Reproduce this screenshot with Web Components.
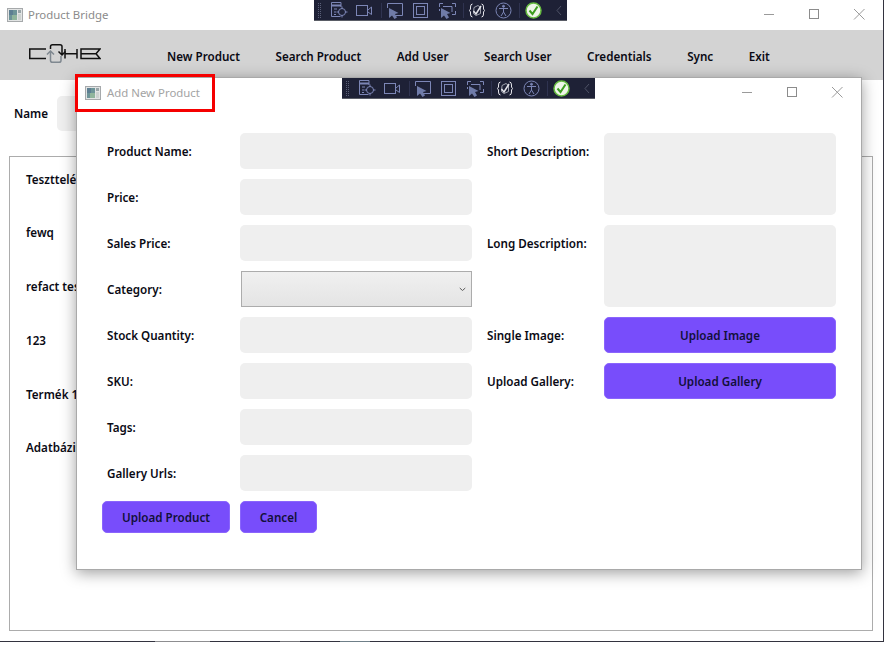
<!DOCTYPE html>
<html>
<head>
<meta charset="utf-8">
<title>Product Bridge</title>
<style>
html,body{margin:0;background:#fff;font-family:"Noto Sans","Open Sans",sans-serif;}
</style>
</head>
<body>
<main-window>
  <window-title slot="title">Product Bridge</window-title>
  <nav-bar slot="nav">
    <nav-item>New Product</nav-item>
    <nav-item>Search Product</nav-item>
    <nav-item>Add User</nav-item>
    <nav-item>Search User</nav-item>
    <nav-item>Credentials</nav-item>
    <nav-item>Sync</nav-item>
    <nav-item>Exit</nav-item>
  </nav-bar>
  <search-row slot="search">Name</search-row>
  <product-list slot="list">
    <product-line>Teszttelés</product-line>
    <product-line>fewq</product-line>
    <product-line>refact teszt</product-line>
    <product-line>123</product-line>
    <product-line>Termék 1</product-line>
    <product-line>Adatbázis</product-line>
  </product-list>
</main-window>

<tool-strip style="left:314px;top:0"></tool-strip>

<product-dialog>
  <window-title slot="title" dialog>Add New Product</window-title>
  <form-row slot="left"><span slot="label">Product Name:</span><form-input></form-input></form-row>
  <form-row slot="left"><span slot="label">Price:</span><form-input></form-input></form-row>
  <form-row slot="left"><span slot="label">Sales Price:</span><form-input></form-input></form-row>
  <form-row slot="left"><span slot="label">Category:</span><form-select></form-select></form-row>
  <form-row slot="left"><span slot="label">Stock Quantity:</span><form-input></form-input></form-row>
  <form-row slot="left"><span slot="label">SKU:</span><form-input></form-input></form-row>
  <form-row slot="left"><span slot="label">Tags:</span><form-input></form-input></form-row>
  <form-row slot="left"><span slot="label">Gallery Urls:</span><form-input></form-input></form-row>

  <form-row slot="right" narrow><span slot="label">Short Description:</span><form-input tall></form-input></form-row>
  <form-row slot="right" narrow><span slot="label">Long Description:</span><form-input tall></form-input></form-row>
  <form-row slot="right" narrow><span slot="label">Single Image:</span><purple-button wide>Upload Image</purple-button></form-row>
  <form-row slot="right" narrow><span slot="label">Upload Gallery:</span><purple-button wide>Upload Gallery</purple-button></form-row>

  <purple-button slot="actions" style="width:128px">Upload Product</purple-button>
  <purple-button slot="actions" style="width:77px">Cancel</purple-button>
</product-dialog>

<tool-strip style="left:342px;top:78px"></tool-strip>
<red-mark></red-mark>

<script>
const appIcon = `
<svg width="16" height="14" viewBox="0 0 16 14" style="flex:none">
  <rect x=".5" y=".5" width="15" height="13" fill="#e2e4e4" stroke="#a6a9ab"/>
  <rect x="2" y="2" width="8" height="10" fill="#6d9498"/>
  <rect x="2" y="2" width="4" height="5" fill="#5d7f92"/>
  <rect x="5" y="7" width="5" height="5" fill="#90b59c"/>
  <rect x="11" y="2" width="3" height="3" fill="#99a5a8"/>
  <rect x="11" y="6" width="3" height="6" fill="#cdd2d0"/>
</svg>`;

const winButtons = `
<svg width="112" height="12" viewBox="0 0 112 12" style="flex:none;position:relative;top:-1px">
  <path d="M1 6.500H11" stroke="#9a9a9a" fill="none"/>
  <rect x="46.500" y="1.500" width="9" height="9" stroke="#8c8c8c" fill="none"/>
  <path d="M91 1L101.500 11.500M101.500 1L91 11.500" stroke="#9a9a9a" fill="none"/>
</svg>`;

class WindowTitle extends HTMLElement {
  constructor() {
    super();
    this.attachShadow({ mode: "open" });
    this.shadowRoot.innerHTML = `
    <style>
    :host{display:flex;align-items:center;height:30px;padding:0 8px 0 7px;font-size:11.4px;color:#8b8b8b;}
    :host([dialog]){padding:0 8px 0 8px;color:#a3a3a3;}
    span{margin-left:5px;flex:1;position:relative;top:-1px;}
    :host([dialog]) span{margin-left:6px;}
    </style>
    ${appIcon}<span><slot></slot></span>${winButtons}`;
  }
}
customElements.define("window-title", WindowTitle);

class NavBar extends HTMLElement {
  constructor() {
    super();
    this.attachShadow({ mode: "open" });
    this.shadowRoot.innerHTML = `
    <style>
    :host{display:flex;align-items:center;height:50px;background:#d3d3d3;padding-left:29px;}
    svg{flex:none;margin-right:66px;position:relative;top:-1px;}
    div{display:flex;gap:35.6px;position:relative;top:1px;}
    </style>
    <svg width="72" height="20" viewBox="0 0 72 20" fill="none">
      <path d="M17 5H.75V14.500H17" stroke="#111" stroke-width="1.500"/>
      <path d="M21.500 5V2.500Q21.500 .75 23.500 .75H31Q33 .75 33 2.500V10M29.500 7.500L33 11L36.500 7.500" stroke="#111" stroke-width="1.500"/>
      <path d="M32 12V16.500Q32 18.300 30 18.300H23.500Q21.500 18.300 21.500 16.500V7.500M18 10.500L21.500 7L25 10.500" stroke="#7f8890" stroke-width="1.500"/>
      <path d="M36 5V14.500M36 9.700H48M48 5V14.500" stroke="#111" stroke-width="1.500"/>
      <path d="M52 5H71L67 9.700L71 14.500H52ZM52 9.700H67" stroke="#111" stroke-width="1.500"/>
    </svg>
    <div><slot></slot></div>`;
  }
}
customElements.define("nav-bar", NavBar);

class NavItem extends HTMLElement {
  constructor() {
    super();
    this.attachShadow({ mode: "open" });
    this.shadowRoot.innerHTML = `
    <style>:host{display:block;font-size:11.65px;font-weight:600;color:#0a0a14;white-space:nowrap;}</style>
    <slot></slot>`;
  }
}
customElements.define("nav-item", NavItem);

class SearchRow extends HTMLElement {
  constructor() {
    super();
    this.attachShadow({ mode: "open" });
    this.shadowRoot.innerHTML = `
    <style>
    :host{display:flex;align-items:center;gap:9px;height:35px;margin:16px 0 25px 14px;font-size:11.65px;font-weight:600;color:#0a0a14;}
    div{width:240px;height:35px;border-radius:5px;background:#efefef;}
    </style>
    <slot></slot><div></div>`;
  }
}
customElements.define("search-row", SearchRow);

class ProductList extends HTMLElement {
  constructor() {
    super();
    this.attachShadow({ mode: "open" });
    this.shadowRoot.innerHTML = `
    <style>
    :host{display:flex;flex-direction:column;gap:9.8px;height:475px;margin:0 10px 0 9px;border:1px solid #acacac;padding:0 16px;box-sizing:border-box;}
    </style>
    <slot></slot>`;
  }
}
customElements.define("product-list", ProductList);

class ProductLine extends HTMLElement {
  constructor() {
    super();
    this.attachShadow({ mode: "open" });
    this.shadowRoot.innerHTML = `
    <style>:host{display:flex;align-items:center;height:44px;font-size:11.65px;font-weight:600;color:#0a0a14;}</style>
    <slot></slot>`;
  }
}
customElements.define("product-line", ProductLine);

class MainWindow extends HTMLElement {
  constructor() {
    super();
    this.attachShadow({ mode: "open" });
    this.shadowRoot.innerHTML = `
    <style>
    :host{display:flex;flex-direction:column;width:884px;height:642px;box-sizing:border-box;border-right:1px solid #33333f;background:#fff;}
    .edge{margin-top:auto;height:1px;background:linear-gradient(90deg,#33333f 0 155px,#8d8d90 155px 210px,#33333f 210px 280px,#77777c 280px 300px,#33333f 300px 340px,#6f7f88 340px 370px,#33333f 370px);}
    </style>
    <slot name="title"></slot>
    <slot name="nav"></slot>
    <slot name="search"></slot>
    <slot name="list"></slot>
    <div class="edge"></div>`;
  }
}
customElements.define("main-window", MainWindow);

class ProductDialog extends HTMLElement {
  constructor() {
    super();
    this.attachShadow({ mode: "open" });
    this.shadowRoot.innerHTML = `
    <style>
    :host{position:absolute;left:76px;top:77px;width:786px;height:493px;box-sizing:border-box;border:1px solid #a9a9a9;background:#fff;box-shadow:0 3px 14px rgba(0,0,0,.38);}
    .form{display:flex;gap:15px;padding:25px 0 0 30px;}
    .col{display:flex;flex-direction:column;gap:10px;}
    .actions{display:flex;gap:10px;padding:10px 0 0 25px;}
    </style>
    <slot name="title"></slot>
    <div class="form">
      <div class="col"><slot name="left"></slot></div>
      <div class="col"><slot name="right"></slot></div>
    </div>
    <div class="actions"><slot name="actions"></slot></div>`;
  }
}
customElements.define("product-dialog", ProductDialog);

class FormRow extends HTMLElement {
  constructor() {
    super();
    this.attachShadow({ mode: "open" });
    this.shadowRoot.innerHTML = `
    <style>
    :host{display:grid;grid-template-columns:133px 232px;font-size:11.65px;font-weight:600;color:#0a0a14;}
    :host([narrow]){grid-template-columns:117px 232px;}
    .label{line-height:38px;height:36px;white-space:nowrap;}
    </style>
    <div class="label"><slot name="label"></slot></div>
    <slot></slot>`;
  }
}
customElements.define("form-row", FormRow);

class FormInput extends HTMLElement {
  constructor() {
    super();
    this.attachShadow({ mode: "open" });
    this.shadowRoot.innerHTML = `
    <style>
    :host{display:block;height:36px;border-radius:5px;background:#efefef;}
    :host([tall]){height:82px;}
    </style>`;
  }
}
customElements.define("form-input", FormInput);

class FormSelect extends HTMLElement {
  constructor() {
    super();
    this.attachShadow({ mode: "open" });
    this.shadowRoot.innerHTML = `
    <style>
    :host{display:flex;align-items:center;justify-content:flex-end;height:36px;margin-left:1px;padding-right:5px;box-sizing:border-box;border:1px solid #acacac;background:linear-gradient(#f0f0f0,#e4e4e4);}
    </style>
    <svg width="7" height="5" viewBox="0 0 7 5"><path d="M.75 1L3.500 3.500L6.250 1" stroke="#5c5c5c" fill="none"/></svg>`;
  }
}
customElements.define("form-select", FormSelect);

class PurpleButton extends HTMLElement {
  constructor() {
    super();
    this.attachShadow({ mode: "open" });
    this.shadowRoot.innerHTML = `
    <style>
    :host{display:flex;align-items:center;justify-content:center;height:32px;box-sizing:border-box;border-radius:5px;background:#784dfb;border:1px solid #8a65fc;font-size:11.65px;font-weight:600;color:#12103a;}
    :host([wide]){height:36px;}
    </style>
    <slot></slot>`;
  }
}
customElements.define("purple-button", PurpleButton);

class ToolStrip extends HTMLElement {
  constructor() {
    super();
    this.attachShadow({ mode: "open" });
    this.shadowRoot.innerHTML = `
    <style>
    :host{position:absolute;display:block;width:253px;height:21px;background:#1e2136;border-bottom:1px solid #5a5d66;box-sizing:border-box;}
    svg{display:block;}
    </style>
    <svg width="253" height="21" viewBox="0 0 253 21" fill="none">
      <g fill="#5a5f78">
        <rect x="4" y="3" width="1" height="1"/><rect x="6" y="5" width="1" height="1"/><rect x="4" y="7" width="1" height="1"/><rect x="6" y="9" width="1" height="1"/><rect x="4" y="11" width="1" height="1"/><rect x="6" y="13" width="1" height="1"/><rect x="4" y="15" width="1" height="1"/><rect x="6" y="17" width="1" height="1"/>
        <rect x="6" y="3" width="1" height="1"/><rect x="4" y="5" width="1" height="1"/><rect x="6" y="7" width="1" height="1"/><rect x="4" y="9" width="1" height="1"/><rect x="6" y="11" width="1" height="1"/><rect x="4" y="13" width="1" height="1"/><rect x="6" y="15" width="1" height="1"/><rect x="4" y="17" width="1" height="1"/>
      </g>
      <g stroke="#7c86b6">
        <path d="M26.500 16.500H17.500V2.500H27V7"/><path d="M17.500 5.500H27" stroke-width="2"/>
        <path d="M20 9H23M20 12H22M20 14.500H22"/>
        <circle cx="28" cy="12" r="3.500"/><path d="M28 6.500V9M28 15V17.500M22.500 12H25M31 12H33.500"/>
        <rect x="42.500" y="5.500" width="11" height="10"/><path d="M54 10L57.500 7V14.500L54 12"/>
        <path d="M79 15.500H88.500V3.500H73.500V8"/>
        <rect x="99.500" y="3.500" width="14" height="14"/><rect x="102.500" y="6.500" width="8" height="8"/>
        <path d="M125.500 7V3.500H129M138 3.500H141.500V7M141.500 11V14.500H138M125.500 9V11"/><path d="M129 6.500H138V12" />
      </g>
      <path d="M75 8L75 18L78 15.500L80.500 19L83 17.500L81 14L84.500 13Z" fill="#6f7ba8"/>
      <path d="M127 8L127 18L130 15.500L132.500 19L135 17.500L133 14L136.500 13Z" fill="#6f7ba8"/>
      <path d="M67.500 3V18M149.500 3V18M205.500 3V18" stroke="#2f3350"/>
      <g stroke="#e4e4ea">
        <path d="M158.500 4Q156.500 4 156.500 7V9L155.500 10.500L156.500 12V14Q156.500 17 158.500 17M167.500 4Q169.500 4 169.500 7V9L170.500 10.500L169.500 12V14Q169.500 17 167.500 17"/>
        <path d="M160 7.500L164 5.500L166.500 7.500V13.500L162 15.500L159.500 13.500Z" stroke="#9fa2ad"/>
        <path d="M159.500 11L162 14L167 6" stroke-width="1.500"/>
      </g>
      <g stroke="#7c86b6">
        <circle cx="189.500" cy="10.500" r="7.500"/>
        <circle cx="189.500" cy="6.300" r="1" fill="#7c86b6"/>
        <path d="M185 8.500H194M189.500 8.500V12M189.500 12L187 16M189.500 12L192 16"/>
      </g>
      <circle cx="219.500" cy="10.500" r="7.500" fill="#eef5e8" stroke="#66bb40" stroke-width="1.500"/>
      <path d="M215.500 10.500L218.500 14L223.500 6.500" stroke="#3c9c1e" stroke-width="2"/>
      <path d="M247 6L243 10.500L247 15" stroke="#4e5266"/>
    </svg>`;
  }
}
customElements.define("tool-strip", ToolStrip);

class RedMark extends HTMLElement {
  constructor() {
    super();
    this.attachShadow({ mode: "open" });
    this.shadowRoot.innerHTML = `
    <style>:host{position:absolute;left:75px;top:74px;width:140px;height:38px;box-sizing:border-box;border:3px solid #f50000;}</style>`;
  }
}
customElements.define("red-mark", RedMark);
</script>
</body>
</html>
